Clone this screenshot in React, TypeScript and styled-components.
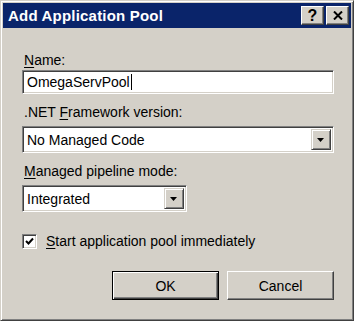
import React from "react";
import styled, { createGlobalStyle } from "styled-components";

const Global = createGlobalStyle`
  html, body { margin: 0; padding: 0; background: #ffffff; }
  body { font-family: "Liberation Sans", Arial, sans-serif; }
`;

const Window = styled.div`
  width: 354px;
  height: 321px;
  box-sizing: border-box;
  background: #d4d0c8;
  border-top: 1px solid #d4d0c8;
  border-left: 1px solid #d4d0c8;
  border-right: 1px solid #404040;
  border-bottom: 1px solid #404040;
  box-shadow: inset 1px 1px 0 #ffffff, inset -1px -1px 0 #808080;
  padding: 2px;
  display: flex;
  flex-direction: column;
`;

const TitleBar = styled.div`
  height: 25px;
  background: #0a246a;
  display: flex;
  align-items: center;
  padding: 0 2px 0 5px;
  gap: 2px;
`;

const Title = styled.div`
  flex: 1;
  color: #ffffff;
  font-weight: bold;
  font-size: 15px;
  letter-spacing: 0.2px;
`;

const CaptionButton = styled.div`
  width: 23px;
  height: 19px;
  box-sizing: border-box;
  background: #d4d0c8;
  border-top: 1px solid #ffffff;
  border-left: 1px solid #ffffff;
  border-right: 1px solid #404040;
  border-bottom: 1px solid #404040;
  box-shadow: inset -1px -1px 0 #808080;
  display: flex;
  align-items: center;
  justify-content: center;
  color: #000;
  font-weight: bold;
  font-size: 16px;
  line-height: 1;
`;

const Body = styled.div`
  flex: 1;
  padding: 24px 17px 0 19px;
  display: flex;
  flex-direction: column;
`;

const Field = styled.div<{ $gap: number }>`
  display: flex;
  flex-direction: column;
  gap: ${(p) => p.$gap}px;
  margin-bottom: 10px;
`;

const Label = styled.div`
  font-size: 14px;
  line-height: 16px;
  color: #000;
  padding-left: 2px;
  u { text-decoration: underline; text-underline-offset: 2px; }
`;

const Sunken = styled.div<{ $width?: number; $height: number }>`
  box-sizing: border-box;
  width: ${(p) => (p.$width ? `${p.$width}px` : "100%")};
  height: ${(p) => p.$height}px;
  background: #ffffff;
  border-top: 1px solid #808080;
  border-left: 1px solid #808080;
  border-right: 1px solid #ffffff;
  border-bottom: 1px solid #ffffff;
  box-shadow: inset 1px 1px 0 #404040, inset -1px -1px 0 #d4d0c8;
  display: flex;
  align-items: center;
  padding: 2px;
`;

const Value = styled.div`
  flex: 1;
  font-size: 14px;
  line-height: 16px;
  padding-left: 2px;
  color: #000;
  display: flex;
  align-items: center;
`;

const Caret = styled.span`
  display: inline-block;
  width: 1px;
  height: 16px;
  background: #000;
  margin-left: 1px;
`;

const DropButton = styled.div`
  width: 20px;
  align-self: stretch;
  box-sizing: border-box;
  background: #d4d0c8;
  border-top: 1px solid #d4d0c8;
  border-left: 1px solid #d4d0c8;
  border-right: 1px solid #404040;
  border-bottom: 1px solid #404040;
  box-shadow: inset 1px 1px 0 #ffffff, inset -1px -1px 0 #808080;
  display: flex;
  align-items: center;
  justify-content: center;
`;

const CheckRow = styled.div`
  display: flex;
  align-items: center;
  gap: 7px;
  margin-top: 11px;
`;

const CheckBox = styled.div`
  width: 15px;
  height: 15px;
  box-sizing: border-box;
  background: #ffffff;
  border-top: 1px solid #808080;
  border-left: 1px solid #808080;
  border-right: 1px solid #ffffff;
  border-bottom: 1px solid #ffffff;
  box-shadow: inset 1px 1px 0 #404040, inset -1px -1px 0 #d4d0c8;
  display: flex;
  align-items: center;
  justify-content: center;
`;

const ButtonRow = styled.div`
  display: flex;
  justify-content: flex-end;
  gap: 8px;
  margin-top: 22px;
`;

const PushButton = styled.div<{ $default?: boolean }>`
  width: 107px;
  height: 29px;
  box-sizing: border-box;
  background: #d4d0c8;
  font-size: 14px;
  color: #000;
  display: flex;
  align-items: center;
  justify-content: center;
  border: 1px solid ${(p) => (p.$default ? "#000000" : "transparent")};
  ${(p) =>
    p.$default
      ? `box-shadow: inset 1px 1px 0 #ffffff, inset -1px -1px 0 #404040, inset -2px -2px 0 #808080;`
      : `border-top-color: #ffffff; border-left-color: #ffffff; border-right-color: #404040; border-bottom-color: #404040; box-shadow: inset -1px -1px 0 #808080;`}
`;

const Arrow = () => (
  <svg width="8" height="4" viewBox="0 0 8 4">
    <path d="M0 0 H7 L3.5 4 Z" fill="#000" />
  </svg>
);

export default function App() {
  return (
    <>
      <Global />
      <Window>
        <TitleBar>
          <Title>Add Application Pool</Title>
          <CaptionButton>?</CaptionButton>
          <CaptionButton>
            <svg width="10" height="9" viewBox="0 0 10 9">
              <path d="M1 0.5 L9 8.5 M9 0.5 L1 8.5" stroke="#000" strokeWidth="2" />
            </svg>
          </CaptionButton>
        </TitleBar>
        <Body>
          <Field $gap={2}>
            <Label>
              <u>N</u>ame:
            </Label>
            <Sunken $height={24}>
              <Value>
                OmegaServPool
                <Caret />
              </Value>
            </Sunken>
          </Field>
          <Field $gap={6}>
            <Label>
              .NET <u>F</u>ramework version:
            </Label>
            <Sunken $height={27}>
              <Value>No Managed Code</Value>
              <DropButton>
                <Arrow />
              </DropButton>
            </Sunken>
          </Field>
          <Field $gap={6}>
            <Label>
              <u>M</u>anaged pipeline mode:
            </Label>
            <Sunken $width={165} $height={27}>
              <Value>Integrated</Value>
              <DropButton>
                <Arrow />
              </DropButton>
            </Sunken>
          </Field>
          <CheckRow>
            <CheckBox>
              <svg width="9" height="9" viewBox="0 0 9 9">
                <path d="M1 4 L3.5 6.5 L8 1.5" stroke="#000" strokeWidth="2" fill="none" />
              </svg>
            </CheckBox>
            <Label>
              <u>S</u>tart application pool immediately
            </Label>
          </CheckRow>
          <ButtonRow>
            <PushButton $default>OK</PushButton>
            <PushButton>Cancel</PushButton>
          </ButtonRow>
        </Body>
      </Window>
    </>
  );
}
